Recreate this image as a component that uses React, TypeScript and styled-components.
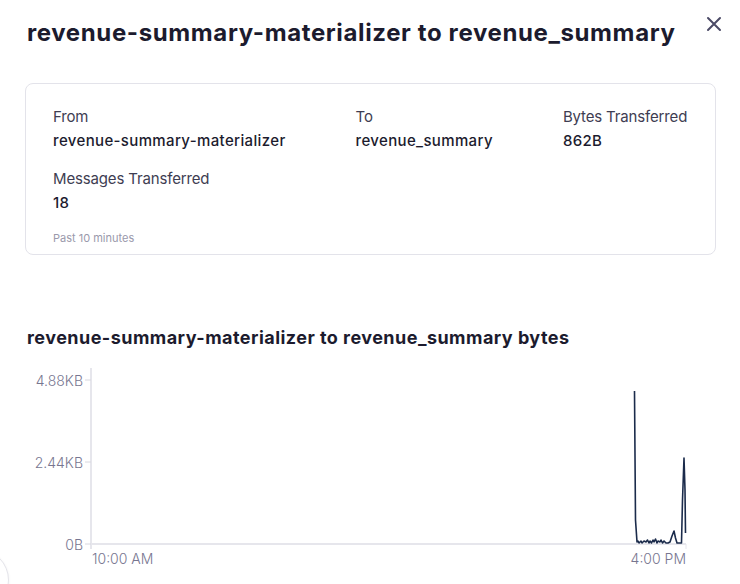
import React from "react";
import styled, { createGlobalStyle } from "styled-components";

const GlobalStyle = createGlobalStyle`
  html, body {
    margin: 0;
    padding: 0;
    background: #ffffff;
    font-family: Inter, "Noto Sans", "Liberation Sans", sans-serif;
    color: #1c1b2e;
  }
  * {
    box-sizing: border-box;
  }
`;

const Panel = styled.div`
  width: 740px;
  height: 584px;
  overflow: hidden;
  padding: 0 24px 0 25px;
  position: relative;
`;

const Header = styled.header`
  display: flex;
  justify-content: space-between;
  align-items: flex-start;
  padding-top: 17px;
`;

const Title = styled.h1`
  margin: 0;
  padding-left: 2px;
  font-size: 24px;
  line-height: 32px;
  font-weight: 700;
  letter-spacing: 0.62px;
  color: #1c1b2e;
`;

const CloseButton = styled.button`
  background: transparent;
  border: none;
  padding: 0;
  margin: -5px -10px 0 0;
  width: 24px;
  height: 24px;
  display: flex;
  align-items: center;
  justify-content: center;
  color: #4b4a66;
  cursor: pointer;
`;

const Card = styled.section`
  margin-top: 34px;
  border: 1px solid #e3e3ea;
  border-radius: 8px;
  padding: 22px 27px 8px 27px;
`;

const Stats = styled.div`
  display: flex;
  flex-wrap: wrap;
  column-gap: 70px;
  row-gap: 16px;
`;

const Stat = styled.div`
  display: flex;
  flex-direction: column;
  gap: 2px;
`;

const Label = styled.span`
  font-size: 15px;
  line-height: 22px;
  letter-spacing: -0.15px;
  color: #3e3d52;
`;

const Value = styled.span`
  font-size: 15px;
  line-height: 22px;
  font-weight: 500;
  letter-spacing: 0.36px;
  color: #1c1b2e;
`;

const Footnote = styled.div`
  margin-top: 16px;
  font-size: 11px;
  line-height: 16px;
  color: #9a99ab;
`;

const ChartTitle = styled.h2`
  margin: 71px 0 0 0;
  padding-left: 2px;
  font-size: 18px;
  line-height: 24px;
  font-weight: 700;
  letter-spacing: 0.46px;
  color: #1c1b2e;
`;

const Chart = styled.svg`
  display: block;
  margin-top: 12px;
  width: 691px;
  height: 215px;
  font-family: Inter, "Noto Sans", "Liberation Sans", sans-serif;
`;

const FloatingBubble = styled.div`
  position: absolute;
  left: -53px;
  top: 549px;
  width: 62px;
  height: 62px;
  border-radius: 50%;
  background: #ffffff;
  border: 1px solid #e4e4ea;
  box-shadow: 0 1px 3px rgba(0, 0, 0, 0.06);
`;

const stats = [
  { label: "From", value: "revenue-summary-materializer" },
  { label: "To", value: "revenue_summary" },
  { label: "Bytes Transferred", value: "862B" },
  { label: "Messages Transferred", value: "18" },
];

// points are in page coords, shifted by the chart's origin (25, 362)
const series: Array<[number, number]> = [
  [634.5, 391],
  [635.5, 520],
  [637, 542],
  [638, 541],
  [639, 543],
  [641, 541],
  [642, 543],
  [644, 541],
  [646, 542],
  [647.5, 540],
  [649, 543],
  [650, 541],
  [651.5, 543],
  [653, 540],
  [654, 542],
  [655.5, 539],
  [657, 543],
  [658, 541],
  [660, 542],
  [661, 540],
  [662.5, 543],
  [664, 541],
  [666, 543],
  [668, 543],
  [670, 542],
  [672, 536],
  [674, 531],
  [675.5, 538],
  [677, 543],
  [681.5, 543],
  [682.5, 500],
  [684, 458],
  [685, 490],
  [685.5, 533],
];

const OX = 25;
const OY = 362;

const yTicks = [
  { label: "4.88KB", y: 380 },
  { label: "2.44KB", y: 462 },
  { label: "0B", y: 544 },
];

const App: React.FC = () => {
  const points = series.map(([x, y]) => `${x - OX},${y - OY}`).join(" ");

  return (
    <>
      <GlobalStyle />
      <Panel>
        <Header>
          <Title>revenue-summary-materializer to revenue_summary</Title>
          <CloseButton type="button" aria-label="Close">
            <svg width="16" height="16" viewBox="0 0 16 16">
              <path
                d="M2 2 L14 14 M14 2 L2 14"
                stroke="currentColor"
                strokeWidth="2"
                strokeLinecap="round"
              />
            </svg>
          </CloseButton>
        </Header>

        <Card>
          <Stats>
            {stats.map(({ label, value }) => (
              <Stat key={label}>
                <Label>{label}</Label>
                <Value>{value}</Value>
              </Stat>
            ))}
          </Stats>
          <Footnote>Past 10 minutes</Footnote>
        </Card>

        <ChartTitle>
          revenue-summary-materializer to revenue_summary bytes
        </ChartTitle>

        <Chart viewBox="0 0 691 215">
          <line x1={66} y1={6} x2={66} y2={187} stroke="#e6e6ec" strokeWidth={2} />
          <line x1={65} y1={182} x2={661} y2={182} stroke="#e6e6ec" strokeWidth={2} />
          <line x1={661} y1={182} x2={661} y2={187} stroke="#e6e6ec" strokeWidth={1} />
          {yTicks.map(({ label, y }) => (
            <g key={label}>
              <line x1={60} y1={y - OY} x2={66} y2={y - OY} stroke="#d8d8e0" strokeWidth={1} />
              <text
                x={58}
                y={y - OY}
                textAnchor="end"
                dominantBaseline="central"
                fontSize={14}
                fontWeight={300}
                fill="#777690"
              >
                {label}
              </text>
            </g>
          ))}
          <text x={67} y={196} dominantBaseline="central" fontSize={14} fontWeight={300} fill="#777690">
            10:00 AM
          </text>
          <text x={661} y={196} textAnchor="end" dominantBaseline="central" fontSize={14} fontWeight={300} fill="#777690">
            4:00 PM
          </text>
          <polyline
            points={points}
            fill="none"
            stroke="#1b2b4b"
            strokeWidth={1.6}
            strokeLinejoin="round"
          />
        </Chart>

        <FloatingBubble />
      </Panel>
    </>
  );
};

export default App;
